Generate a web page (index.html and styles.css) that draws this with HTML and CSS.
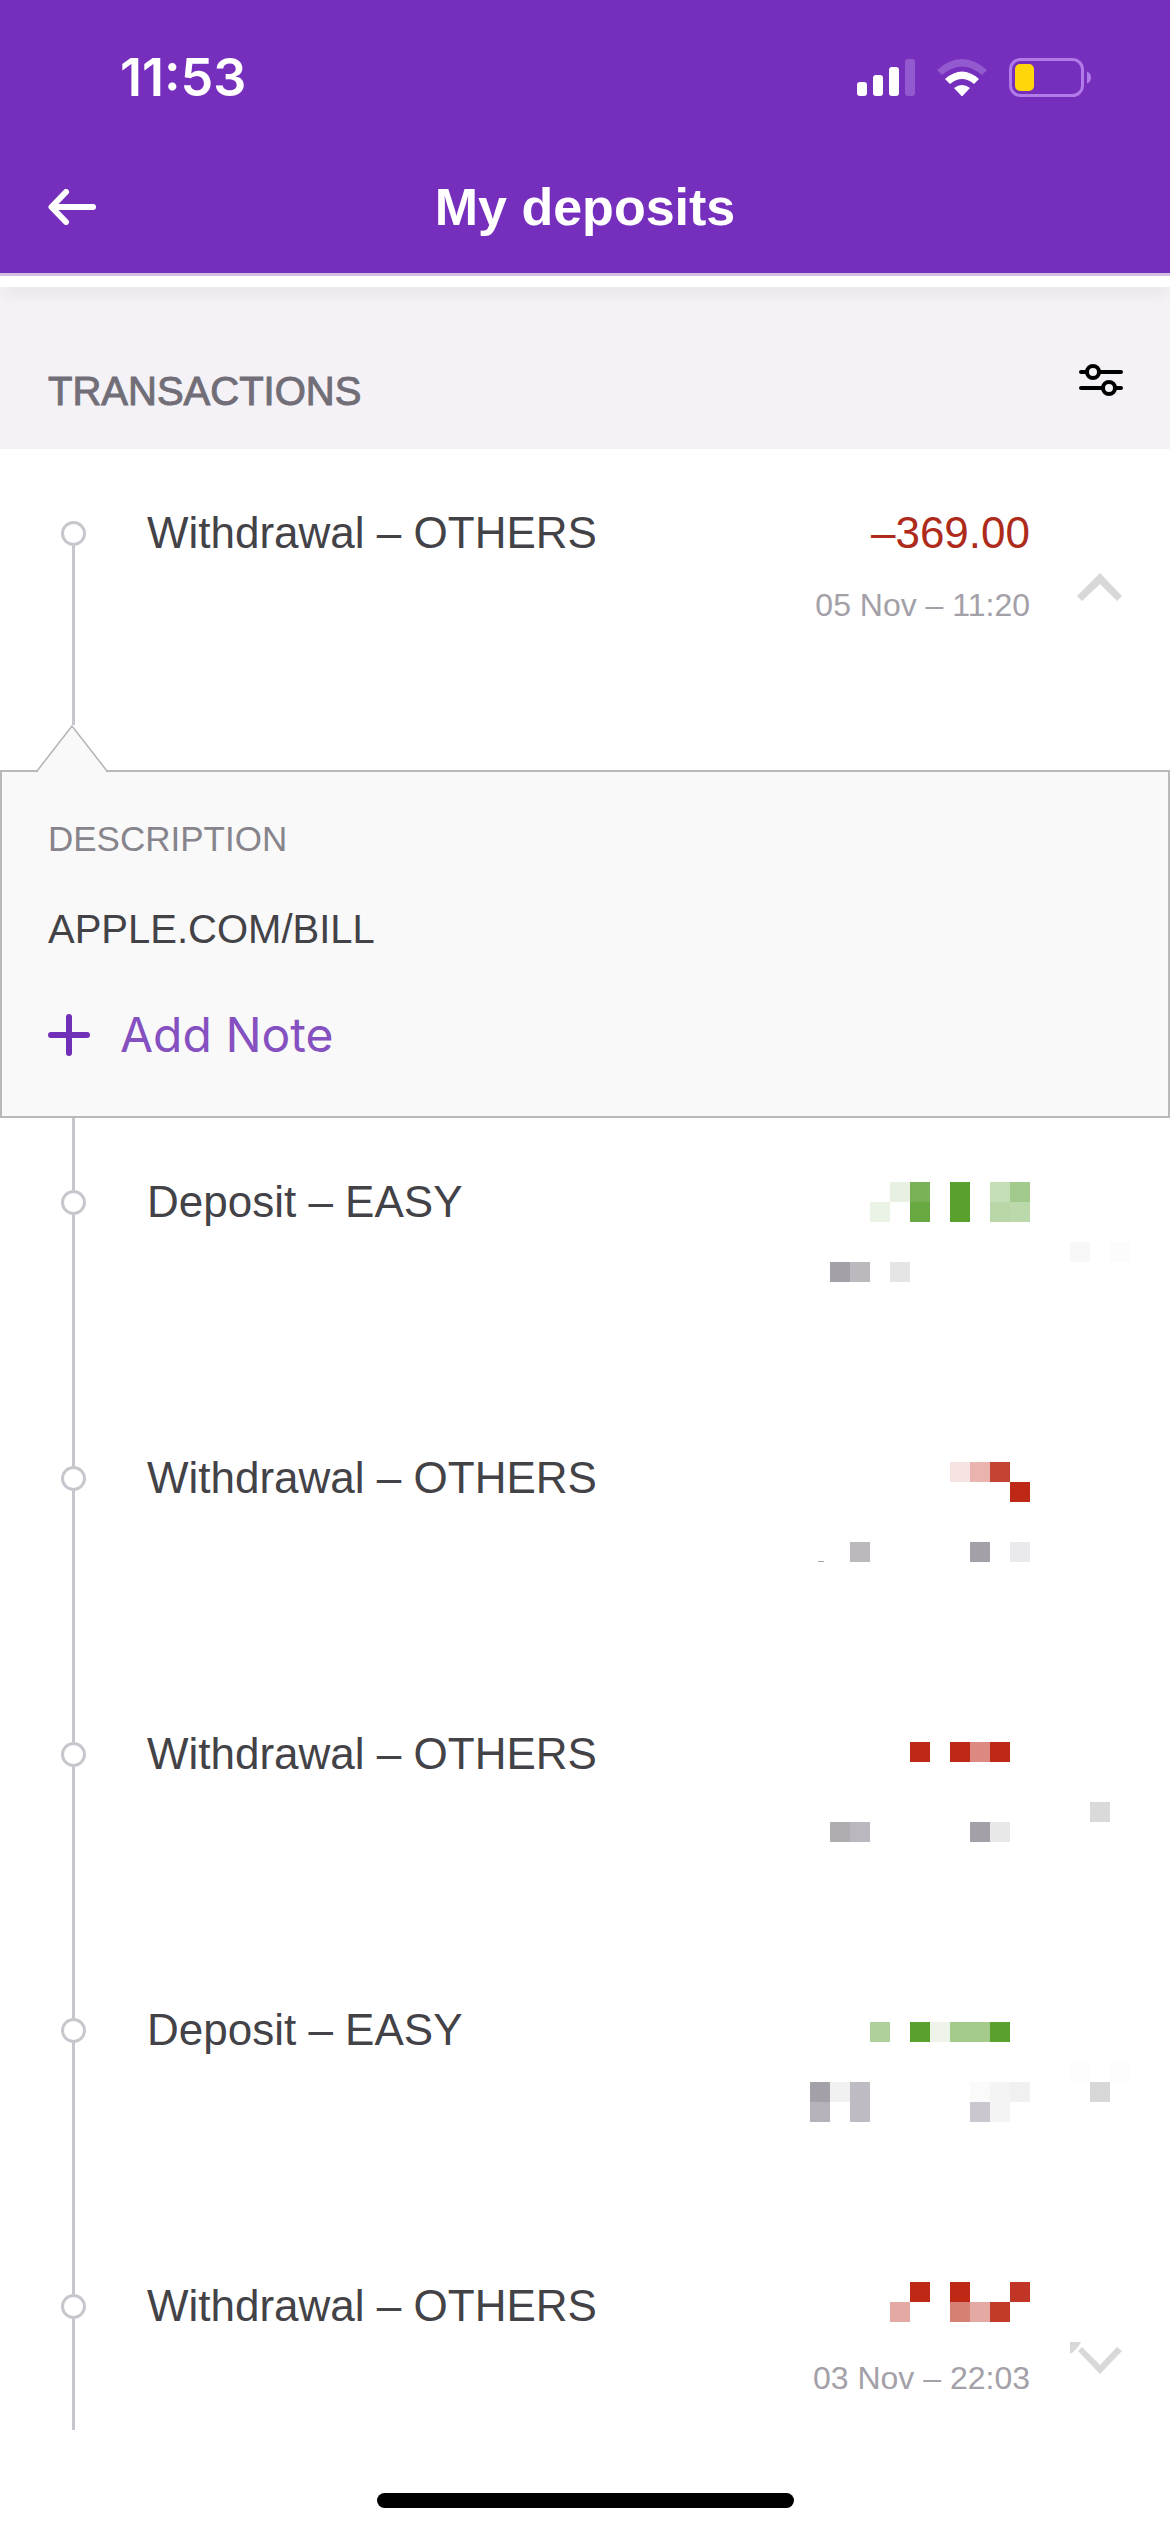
FILE: index.html
```html
<!DOCTYPE html>
<html lang="en">
<head>
<meta charset="utf-8">
<meta name="viewport" content="width=device-width, initial-scale=1">
<title>My deposits</title>
<link rel="stylesheet" href="styles.css">
</head>
<body>
<header class="app-header">
  <div class="status-bar">
    <time class="clock">11:53</time>
    <div class="status-icons">
      <svg width="58" height="38" viewBox="0 0 58 38" fill="#fff" aria-hidden="true">
        <rect x="0" y="23" width="10" height="14" rx="3"/>
        <rect x="16" y="16" width="10" height="21" rx="3"/>
        <rect x="32" y="8" width="10" height="29" rx="3"/>
        <rect x="48" y="0" width="10" height="37" rx="3" fill="#935acf"/>
      </svg>
      <svg width="50" height="38" viewBox="0 0 50 38" aria-hidden="true">
        <path d="M0 11Q25 -11 50 11L45 16Q25 -1 5 16Z" fill="#935acf"/>
        <path d="M8 20Q25 5 42 20L37 25Q25 15 13 25Z" fill="#fff"/>
        <path d="M17 29Q25 23 33 29L26 36.500Q25 37.500 24 36.500Z" fill="#fff"/>
      </svg>
      <svg width="82" height="40" viewBox="0 0 82 40" aria-hidden="true">
        <rect x="1.500" y="1.500" width="72" height="36" rx="10" fill="none" stroke="#b07be8" stroke-width="3"/>
        <path d="M78 13.500Q82 15 82 19.500T78 25.500Z" fill="#b07be8"/>
        <rect x="6" y="6" width="19" height="27" rx="5" fill="#ffd60a"/>
      </svg>
    </div>
  </div>
  <nav class="nav-bar">
    <button class="icon-button" type="button" aria-label="Back">
      <svg width="48" height="36" viewBox="0 0 48 36" fill="none" stroke="#fff" stroke-width="6" stroke-linecap="round" stroke-linejoin="round" aria-hidden="true">
        <path d="M45 18H4M18 3L3.500 18L18 33"/>
      </svg>
    </button>
    <h1 class="page-title">My deposits</h1>
  </nav>
</header>
<div class="strip"></div>

<main>
  <div class="section-head">
    <h2 class="section-title">TRANSACTIONS</h2>
    <button class="icon-button" type="button" aria-label="Filter transactions">
      <svg width="44" height="32" viewBox="0 0 44 32" fill="none" stroke="#000" stroke-width="4" stroke-linecap="round" aria-hidden="true">
        <path d="M2 8H8M20 8H42M2 24H24M36 24H42"/>
        <circle cx="14" cy="8" r="6"/>
        <circle cx="30" cy="24" r="6"/>
      </svg>
    </button>
  </div>

  <ol class="timeline">
    <li>
      <div class="row row-first">
        <span class="rail"><i class="dot"></i></span>
        <h3 class="row-title">Withdrawal – OTHERS</h3>
        <div class="values">
          <span class="amount">–369.00</span>
          <time class="date">05 Nov – 11:20</time>
        </div>
        <button class="toggle" type="button" aria-label="Collapse" aria-expanded="true">
          <svg width="60" height="40" viewBox="0 0 60 40" fill="#d8d8d8" aria-hidden="true"><path d="M30 6L52 29L47 34L30 17L12 34L7 29Z"/></svg>
        </button>
      </div>
      <div class="details">
        <svg class="details-tip" width="70" height="47" viewBox="0 0 70 47" aria-hidden="true">
          <path d="M1 45L35 1L69 45V47H1Z" fill="#f9f9f9"/>
          <path d="M0 46L35 1L70 46" fill="none" stroke="#b4b4b4" stroke-width="1.500"/>
        </svg>
        <div class="panel">
          <p class="panel-label">DESCRIPTION</p>
          <p class="panel-text">APPLE.COM/BILL</p>
          <button class="add-note" type="button">
            <svg width="42" height="42" viewBox="0 0 42 42" stroke="#7030b8" stroke-width="6" stroke-linecap="round" aria-hidden="true"><path d="M21 3V39M3 21H39"/></svg>
            Add Note
          </button>
        </div>
      </div>
    </li>

    <li class="row">
      <span class="rail"><i class="dot"></i></span>
      <h3 class="row-title">Deposit – EASY</h3>
      <svg class="mask" width="360" height="276" viewBox="0 0 360 276" shape-rendering="crispEdges" aria-hidden="true">
        <path d="M80 64h20v20h-20z" fill="#e7f0e1"/><path d="M100 64h20v20h-20z" fill="#7ab156"/>
        <path d="M140 64h20v40h-20z" fill="#59a02c"/><path d="M180 64h20v20h-20z" fill="#c6deb8"/>
        <path d="M200 64h20v20h-20z" fill="#a3ca8d"/><path d="M60 84h20v20h-20z" fill="#ebf3e6"/>
        <path d="M100 84h20v20h-20z" fill="#68a942"/><path d="M180 84h20v20h-20z" fill="#b8d6a6"/>
        <path d="M200 84h20v20h-20z" fill="#bcd9ac"/><path d="M260 124h20v20h-20z" fill="#f8f8f8"/>
        <path d="M300 124h20v20h-20z" fill="#fcfcfc"/><path d="M20 144h20v20h-20z" fill="#a3a0a7"/>
        <path d="M40 144h20v20h-20z" fill="#bbb8be"/><path d="M80 144h20v20h-20z" fill="#e5e5e5"/>
      </svg>
    </li>

    <li class="row">
      <span class="rail"><i class="dot"></i></span>
      <h3 class="row-title">Withdrawal – OTHERS</h3>
      <svg class="mask" width="360" height="276" viewBox="0 0 360 276" shape-rendering="crispEdges" aria-hidden="true">
        <path d="M140 68h20v20h-20z" fill="#f7e3e2"/><path d="M160 68h20v20h-20z" fill="#eab4ae"/>
        <path d="M180 68h20v20h-20z" fill="#c44333"/><path d="M200 88h20v20h-20z" fill="#be2814"/>
        <path d="M40 148h20v20h-20z" fill="#bbb8be"/><path d="M160 148h20v20h-20z" fill="#a3a0a8"/>
        <path d="M200 148h20v20h-20z" fill="#eaeaec"/><path d="M8 167h6v1h-6z" fill="#a3a0a8"/>
      </svg>
    </li>

    <li class="row">
      <span class="rail"><i class="dot"></i></span>
      <h3 class="row-title">Withdrawal – OTHERS</h3>
      <svg class="mask" width="360" height="276" viewBox="0 0 360 276" shape-rendering="crispEdges" aria-hidden="true">
        <path d="M100 72h20v20h-20zM140 72h20v20h-20zM180 72h20v20h-20z" fill="#be2814"/>
        <path d="M160 72h20v20h-20z" fill="#dd8880"/><path d="M280 132h20v20h-20z" fill="#dadada"/>
        <path d="M20 152h20v20h-20z" fill="#afadb2"/><path d="M40 152h20v20h-20z" fill="#bab8be"/>
        <path d="M160 152h20v20h-20z" fill="#a3a0a8"/><path d="M180 152h20v20h-20z" fill="#e8e8e8"/>
      </svg>
    </li>

    <li class="row">
      <span class="rail"><i class="dot"></i></span>
      <h3 class="row-title">Deposit – EASY</h3>
      <svg class="mask" width="360" height="276" viewBox="0 0 360 276" shape-rendering="crispEdges" aria-hidden="true">
        <path d="M60 76h20v20h-20z" fill="#aed09c"/><path d="M100 76h20v20h-20zM180 76h20v20h-20z" fill="#59a02c"/>
        <path d="M120 76h20v20h-20z" fill="#eff4eb"/><path d="M140 76h40v20h-40z" fill="#a4ca8c"/>
        <path d="M260 116h20v20h-20zM300 116h20v20h-20z" fill="#fdfdfd"/>
        <path d="M0 136h20v20h-20z" fill="#a3a0a7"/><path d="M20 136h20v20h-20z" fill="#f1f1f1"/>
        <path d="M40 136h20v40h-20z" fill="#bebbc2"/><path d="M0 156h20v20h-20z" fill="#b5b2b9"/>
        <path d="M160 136h20v20h-20z" fill="#fafafa"/><path d="M180 136h20v40h-20z" fill="#f4f4f4"/>
        <path d="M200 136h20v20h-20z" fill="#f0f0f0"/><path d="M160 156h20v20h-20z" fill="#cac8ce"/>
        <path d="M280 136h20v20h-20z" fill="#d7d7d7"/>
      </svg>
    </li>

    <li class="row row-last">
      <span class="rail"><i class="dot"></i></span>
      <h3 class="row-title">Withdrawal – OTHERS</h3>
      <div class="values">
        <svg width="220" height="48" viewBox="0 0 220 48" shape-rendering="crispEdges" aria-hidden="true">
          <path d="M100 0h20v20h-20zM140 0h20v20h-20z" fill="#be2814"/><path d="M200 0h20v20h-20z" fill="#c03525"/>
          <path d="M80 20h20v20h-20zM160 20h20v20h-20z" fill="#e5a9a3"/><path d="M140 20h20v20h-20z" fill="#d67f74"/>
          <path d="M180 20h20v20h-20z" fill="#c23b29"/>
        </svg>
        <time class="date">03 Nov – 22:03</time>
      </div>
      <button class="toggle" type="button" aria-label="Expand" aria-expanded="false">
        <svg width="60" height="40" viewBox="0 0 60 40" fill="#d8d8d8" aria-hidden="true"><path d="M0 2H11Q7 10 0 14Z"/><path d="M8 11L12 7L30 25L47 7L52 11L30 34Z"/></svg>
      </button>
    </li>
  </ol>
</main>

<footer class="home-area"><div class="home-indicator"></div></footer>
</body>
</html>
```
FILE: styles.css
```css
* {
  box-sizing: border-box;
}

body,
h1,
h2,
h3,
p,
ol {
  margin: 0;
  padding: 0;
}

body {
  background: #fff;
  color: #434247;
  font-family: "Liberation Sans", Arial, sans-serif;
}

button {
  padding: 0;
  border: 0;
  background: none;
  color: inherit;
  font: inherit;
}

svg {
  display: block;
  flex: none;
}

/* Header */
.app-header {
  background: #762fbd;
  border-bottom: 3px solid #d3bfe4;
  color: #fff;
}

.status-bar {
  display: flex;
  justify-content: space-between;
  align-items: center;
  padding: 48px 79px 33px 120px;
}

.clock {
  font: 600 52px/60px Inter, sans-serif;
}

.status-icons {
  display: flex;
  align-items: center;
  gap: 22px;
}

.nav-bar {
  display: grid;
  grid-template-columns: 1fr auto 1fr;
  align-items: center;
  height: 132px;
  padding: 0 48px;
}

.nav-bar .icon-button {
  justify-self: start;
}

.page-title {
  font: 700 52px/60px "Liberation Sans", Arial, sans-serif;
}

.strip {
  position: relative;
  height: 11px;
  background: #fff;
  box-shadow: 0 8px 14px -4px rgba(60, 50, 80, 0.24);
}

/* Section heading */
.section-head {
  display: flex;
  justify-content: space-between;
  align-items: flex-start;
  padding: 77px 47px 31px 48px;
  background: #f4f2f6;
}

.section-title {
  color: #716e78;
  font-size: 40px;
  font-weight: 400;
  line-height: 54px;
  -webkit-text-stroke: 1px currentColor;
}

/* Timeline */
.timeline {
  list-style: none;
}

.row {
  display: grid;
  grid-template-columns: 147px 1fr 220px 140px;
  min-height: 276px;
}

.row-last {
  min-height: 208px;
}

.rail {
  display: flex;
  flex-direction: column;
  align-items: center;
}

.rail::before,
.rail::after {
  content: "";
  width: 3px;
  background: #c8c5cd;
}

.rail::before {
  height: 72px;
}

.rail::after {
  flex: 1;
}

.row-first .rail::before {
  background: none;
}

.dot {
  width: 25px;
  height: 25px;
  border: 3px solid #c8c5cd;
  border-radius: 50%;
}

.row-title {
  padding-top: 60px;
  font-size: 44px;
  font-weight: 400;
  line-height: 48px;
}

.values {
  display: flex;
  flex-direction: column;
  align-items: flex-end;
  gap: 28px;
  padding-top: 60px;
  white-space: nowrap;
}

.amount {
  color: #ae2a1a;
  font-size: 44px;
  line-height: 48px;
}

.date {
  color: #a3a0a8;
  font-size: 32px;
  line-height: 40px;
}

.toggle {
  display: flex;
  justify-content: center;
  align-items: flex-start;
  padding-top: 118px;
}

.mask {
  grid-column: 3 / -1;
}

/* Expanded details */
.details-tip {
  position: relative;
  margin: 0 0 -2px 37px;
}

.panel {
  padding: 47px 46px 51px;
  border: 2px solid #b9b9b9;
  background: #f9f9f9;
}

.panel-label {
  color: #87848c;
  font-size: 35px;
  line-height: 40px;
}

.panel-text {
  margin-top: 46px;
  font-size: 40px;
  line-height: 48px;
}

.add-note {
  display: flex;
  align-items: center;
  gap: 30px;
  margin-top: 52px;
  color: #8550c0;
  font: 400 48px/60px Inter, sans-serif;
}

/* Home indicator */
.home-area {
  padding: 63px 0 24px;
}

.home-indicator {
  width: 417px;
  height: 15px;
  margin: 0 auto;
  border-radius: 8px;
  background: #000;
}
```
